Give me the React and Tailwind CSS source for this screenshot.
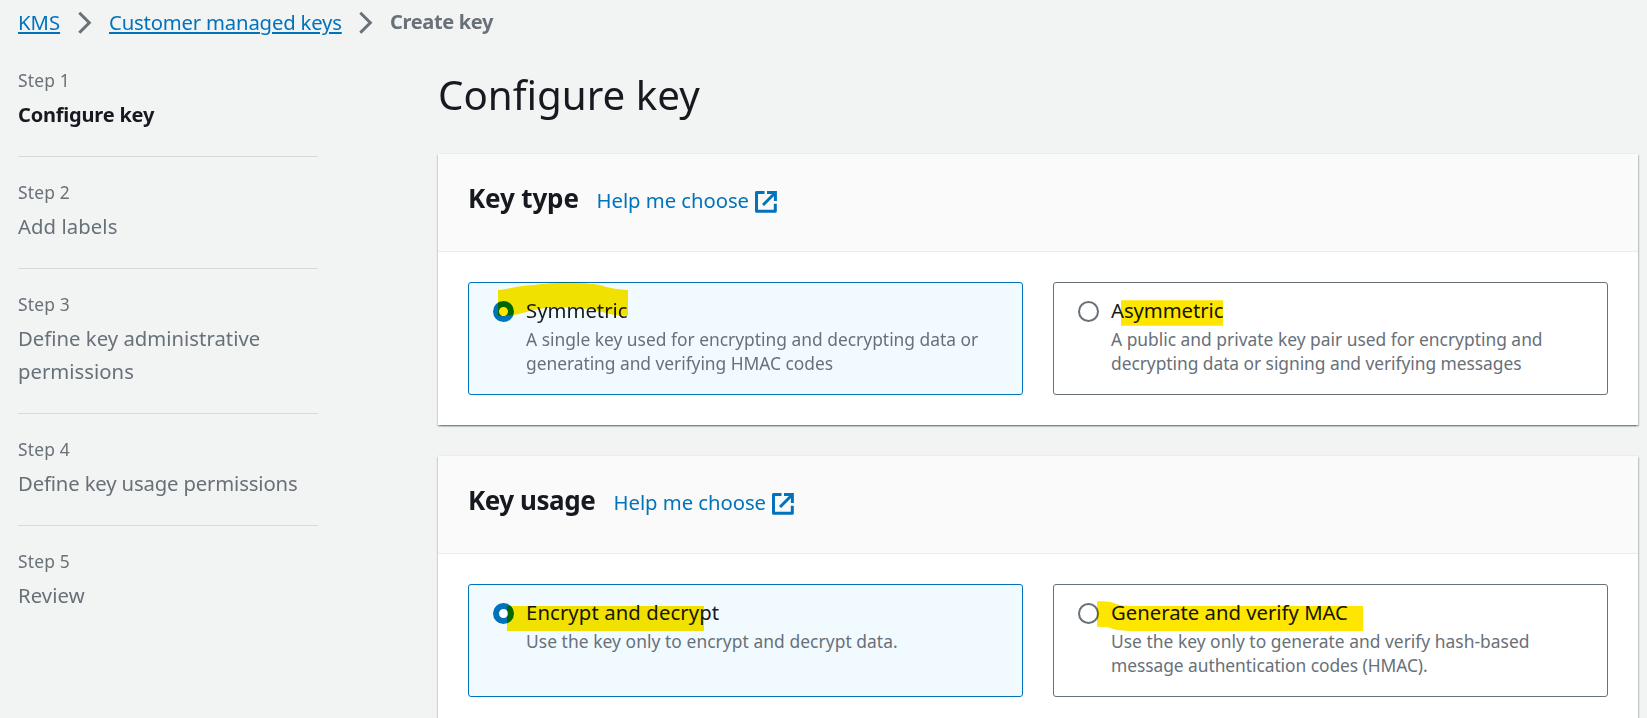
import React from 'react';

const steps = [
  { label: 'Configure key', active: true },
  { label: 'Add labels', spacing: 'tracking-[0.08px]' },
  { label: 'Define key administrative permissions', spacing: 'tracking-[0.02px]' },
  { label: 'Define key usage permissions', spacing: 'tracking-[-0.15px]' },
  { label: 'Review', spacing: 'tracking-[0.1px]' },
];

function Chevron() {
  return (
    <svg className="mx-[17px] h-6 w-[14px] shrink-0" viewBox="0 0 14 24" fill="none" stroke="#687078" strokeWidth="3">
      <path d="M1.3 2.7 11.3 12.7 1.3 22.7" />
    </svg>
  );
}

function ExternalIcon() {
  return (
    <svg className="h-[22px] w-[22px] shrink-0 translate-y-[5px]" viewBox="0 0 22 22" fill="none" stroke="#0073bb" strokeWidth="3">
      <path d="M9.5 1.5H1.5V20.3H20.3V12.8" strokeLinejoin="round" />
      <path d="M12 1.5H20.4V10" />
      <path d="M20 2 8 14" />
    </svg>
  );
}

function Highlight({ d, fill = '#ffe600' }) {
  return (
    <svg className="pointer-events-none absolute -top-px -left-px h-[113px] w-[555px] mix-blend-multiply" viewBox="0 0 555 113">
      <path d={d} fill={fill} />
    </svg>
  );
}

function Option({ selected, title, spacing = '', lines, highlight }) {
  return (
    <div
      className={`relative flex h-[113px] flex-1 rounded-[3px] border pt-[11px] pl-6 ${
        selected ? 'border-[#0073bb] bg-[#f1faff]' : 'border-[#687078] bg-white'
      }`}
    >
      <span
        className={`mt-[7px] h-[21px] w-[21px] shrink-0 rounded-full bg-white ${
          selected ? 'border-[6px] border-[#0073bb]' : 'border-2 border-[#687078]'
        }`}
      />
      <div className="ml-3 whitespace-nowrap">
        <div className={`text-[20.3px] leading-[33px] text-[#16191f] ${spacing}`}>{title}</div>
        {lines.map(([line, tracking]) => (
          <div key={line} className={`text-[17.4px] leading-6 text-[#687078] ${tracking}`}>
            {line}
          </div>
        ))}
      </div>
      <Highlight d={highlight} />
    </div>
  );
}

function Panel({ title, titleClass, children }) {
  return (
    <section className="h-[272px] border-t border-[#eaeded] bg-white shadow-[0_1.5px_1.5px_0_rgba(0,28,36,0.3),1.5px_1.5px_1.5px_0_rgba(0,28,36,0.15),-1.5px_1.5px_1.5px_0_rgba(0,28,36,0.15)]">
      <header className="flex h-[98px] items-baseline border-b border-[#eaeded] bg-[#fafafa] px-[30px] pt-6">
        <h2 className={`text-[26px] leading-[40px] font-bold whitespace-nowrap text-[#16191f] ${titleClass}`}>{title}</h2>
        <a className="ml-[18.5px] flex w-[158.5px] items-baseline text-[20.3px] leading-[33px] tracking-[-0.04px] whitespace-nowrap text-[#0073bb]">
          Help me choose
        </a>
        <ExternalIcon />
      </header>
      <div className="flex gap-[30px] p-[30px]">{children}</div>
    </section>
  );
}

export default function App() {
  return (
    <div className="h-[718px] w-[1647px] overflow-hidden bg-[#f2f3f3] font-['Noto_Sans','Open_Sans',sans-serif]">
      <nav className="flex h-[46px] items-center pb-[2px] pl-[18px] text-[20.3px] leading-[32px] whitespace-nowrap">
        <a className="w-[43px] text-[#0073bb] underline decoration-2 underline-offset-[2px]">KMS</a>
        <Chevron />
        <a className="w-[233px] tracking-[-0.18px] text-[#0073bb] underline decoration-2 underline-offset-[2px]">
          Customer managed keys
        </a>
        <Chevron />
        <span className="text-[20px] font-bold tracking-[-0.35px] text-[#687078]">Create key</span>
      </nav>

      <div className="flex">
        <aside className="ml-[18px] w-[300px] pt-[21px]">
          {steps.map((step, i) => (
            <div key={step.label} className={i > 0 ? 'border-t border-[#d5dbdb] pt-[22px]' : ''}>
              <div className="text-[17.4px] leading-[27px] tracking-[0.2px] text-[#687078]">Step {i + 1}</div>
              <div
                className={`mt-1 pb-[25px] leading-[33px] ${
                  step.active
                    ? 'text-[20px] font-bold tracking-[-0.2px] text-[#16191f]'
                    : `text-[20.3px] text-[#687078] ${step.spacing}`
                }`}
              >
                {step.label}
              </div>
            </div>
          ))}
        </aside>

        <main className="ml-[120px] w-[1200px]">
          <h1 className="mt-[22px] mb-[31px] text-[40.3px] leading-[54px] text-[#16191f]">Configure key</h1>
          <div className="flex flex-col gap-[30px]">
            <Panel title="Key type" titleClass="w-[110px] tracking-[-0.15px]">
              <Option
                selected
                title="Symmetric"
                lines={[
                  ['A single key used for encrypting and decrypting data or', ''],
                  ['generating and verifying HMAC codes', 'tracking-[-0.04px]'],
                ]}
                highlight="M30 8C46 6 52 3.5 66 3Q80 .5 98 .5Q122 .5 132 3Q145 7.5 160 8V33.7Q148 33.5 142 32Q120 25.5 98 25.5Q74 25 60 29.5C50 33 40 33.7 30 33.7Z"
              />
              <Option
                title="Asymmetric"
                spacing="tracking-[-0.07px]"
                lines={[
                  ['A public and private key pair used for encrypting and', ''],
                  ['decrypting data or signing and verifying messages', 'tracking-[-0.05px]'],
                ]}
                highlight="M68 18.3H170V43.7H68Z"
              />
            </Panel>
            <Panel title="Key usage" titleClass="w-[127px] tracking-[-0.45px]">
              <Option
                selected
                title="Encrypt and decrypt"
                spacing="tracking-[0.11px]"
                lines={[['Use the key only to encrypt and decrypt data.', 'tracking-[0.06px]']]}
                highlight="M39 22H236V47H39Z"
              />
              <Option
                title="Generate and verify MAC"
                lines={[
                  ['Use the key only to generate and verify hash-based', 'tracking-[0.02px]'],
                  ['message authentication codes (HMAC).', 'tracking-[-0.06px]'],
                ]}
                highlight="M44 17.3Q56 16.5 62 19.5Q68 22 78 22H310V47H76Q62 46.5 56 43.5Q50 42.5 44 42.7Z"
              />
            </Panel>
          </div>
        </main>
      </div>
    </div>
  );
}
